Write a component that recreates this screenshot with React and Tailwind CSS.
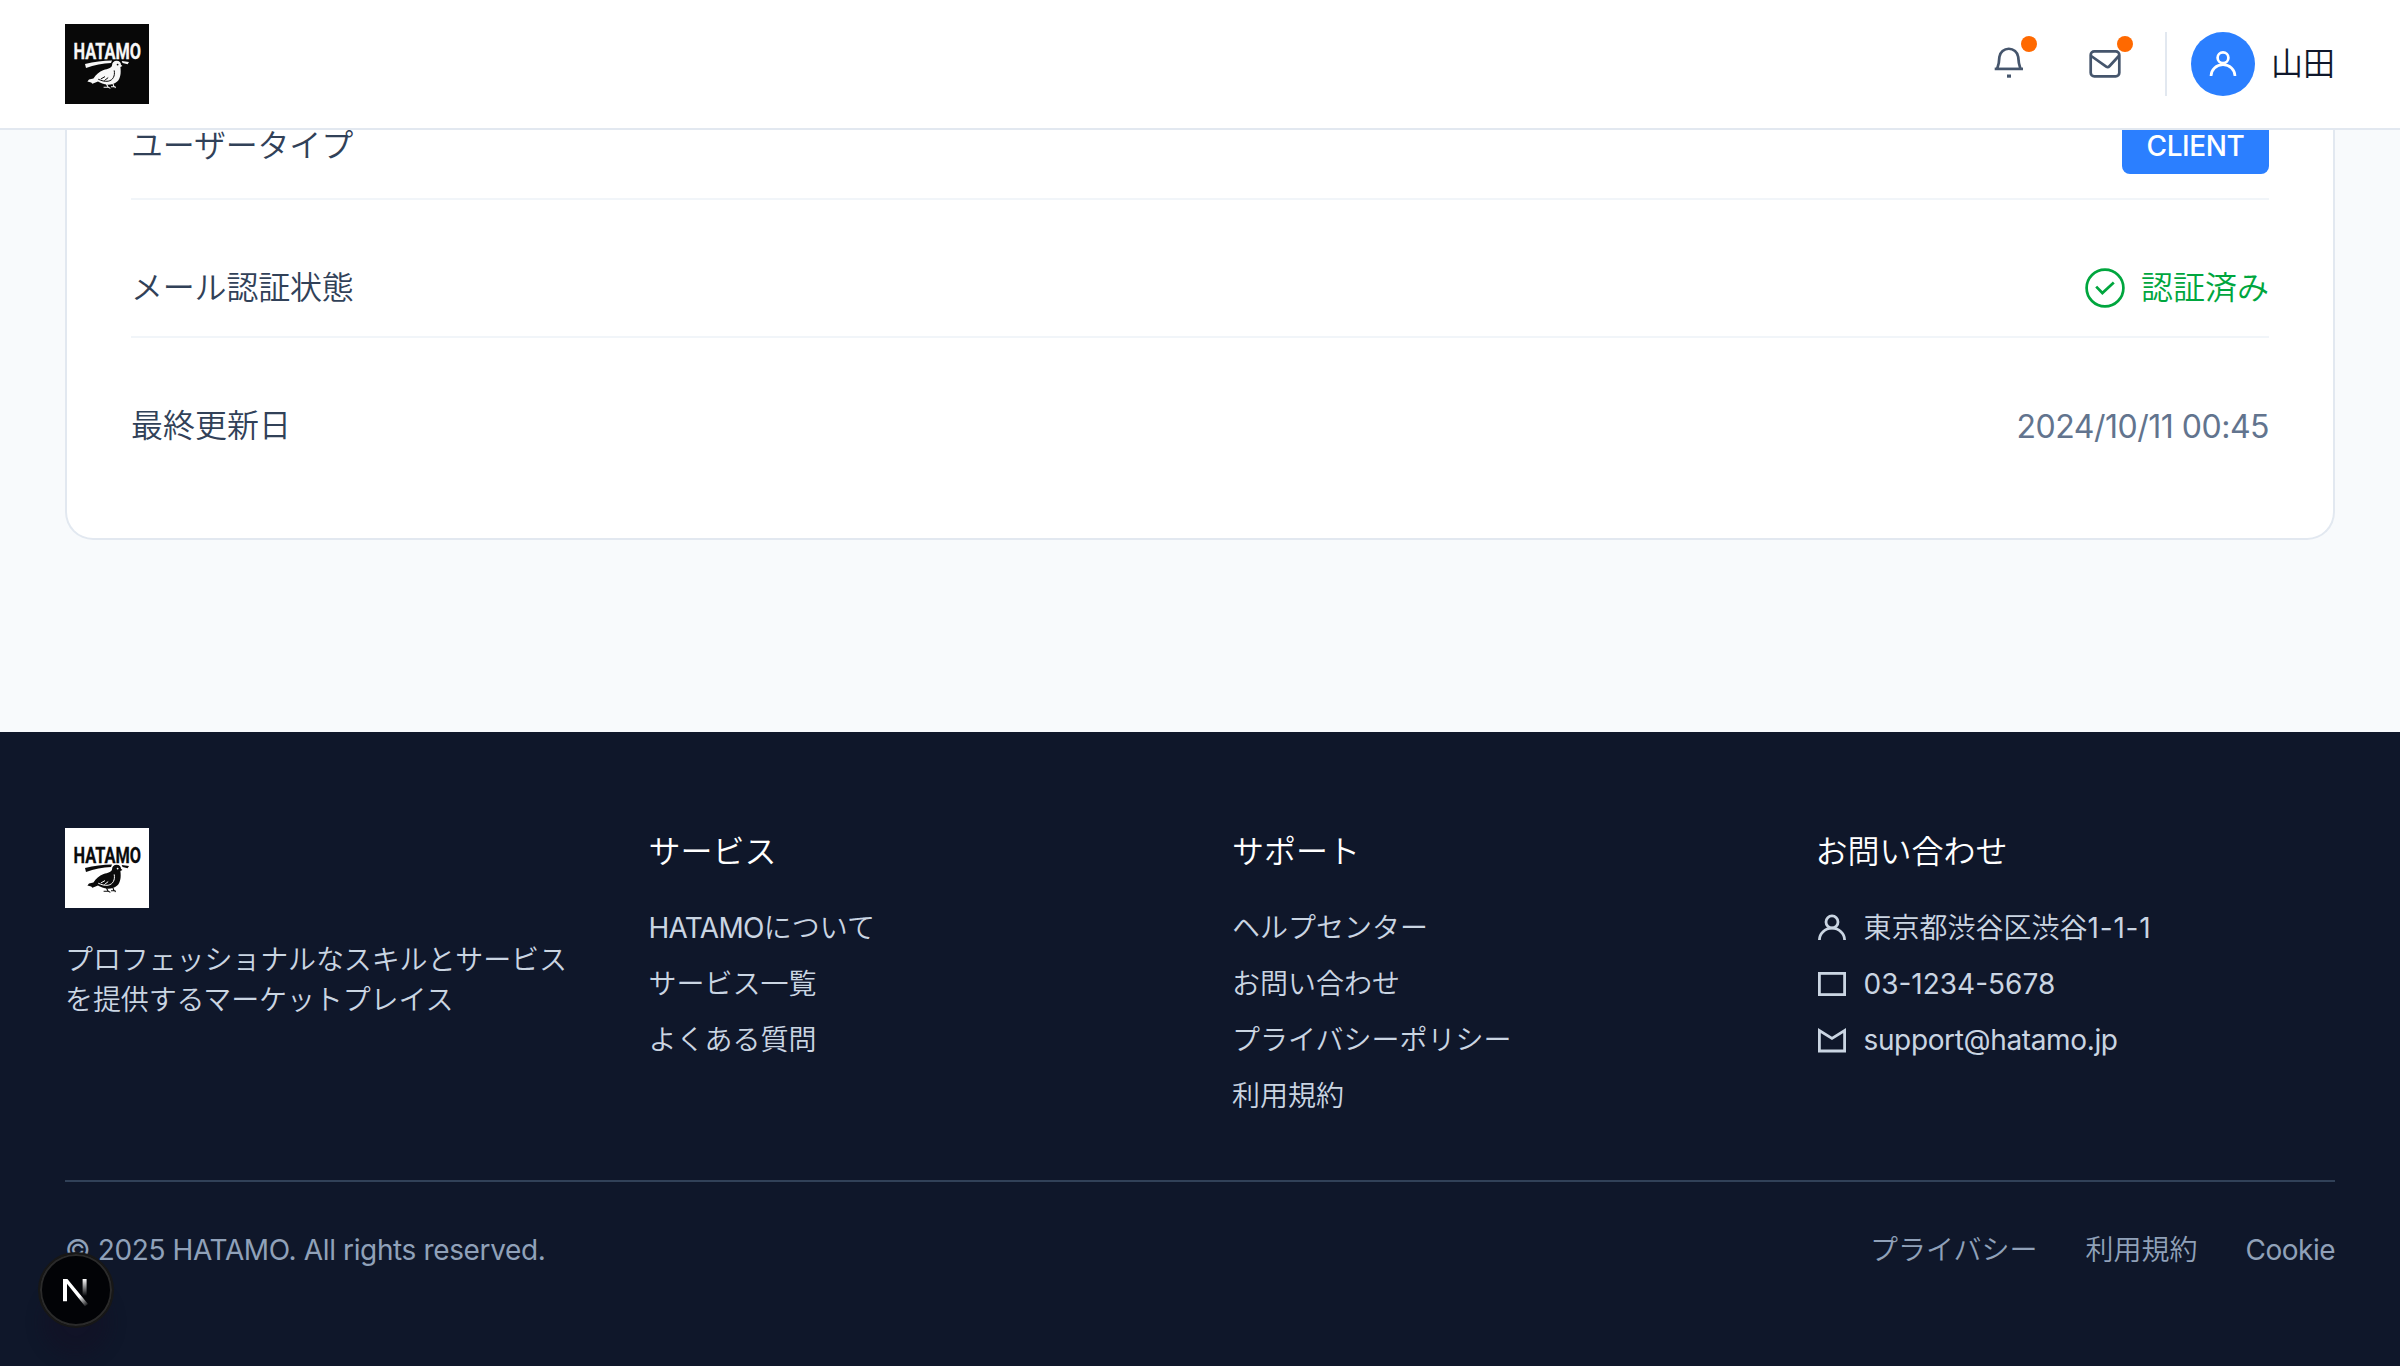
import React from "react";

const CONTACT = [
  { icon: "user", text: "東京都渋谷区渋谷", latin: "1-1-1", tracking: "tracking-[0.8px]" },
  { icon: "phone", text: "", latin: "03-1234-5678", tracking: "" },
  { icon: "mail", text: "", latin: "support@hatamo.jp", tracking: "tracking-[-0.36px]" },
];

function Latin({ className = "", children }) {
  return <span className={`font-normal ${className}`}>{children}</span>;
}

function Logo({ ink, paper }) {
  return (
    <svg width="84" height="80" viewBox="0 0 84 80" style={{ background: paper }} className="block overflow-visible">
      <text x="8.5" y="35.2" textLength="67.5" lengthAdjust="spacingAndGlyphs" fontFamily="Roboto, sans-serif" fontWeight="700" fontSize="21.4" fill={ink} stroke={ink} strokeWidth="0.3">
        HATAMO
      </text>
      <path d="M20 40 C29 37.8 38 36.7 47 36.6 L46 39 C38 39.2 29 41 21 44 Z" fill={ink} />
      <path d="M56.7 37 L64 38 L62.6 40.2 L57.6 39 Z" fill={ink} />
      <path
        d="M51.6 36.8 C54.6 36.8 56 39 56 40.8 L57.4 42 L55.4 43 C56.2 49.5 55.4 54.6 52.2 57.6 C49.6 60 46.5 60.8 43 60.8 C38.5 60.7 35.5 59 33 57.6 L27.4 59.8 L26.2 58.4 L22.4 57.6 L24 55.6 L28.4 54.6 C31 50.6 34 48 38.6 46 C43 44.6 46.4 44 47 41.4 C47.2 38.4 49 36.8 51.6 36.8 Z"
        fill={ink}
      />
      <path d="M49.2 46.4 C50.2 52 48 56.2 43.2 57.2 C39.5 57.8 36.4 56.6 33.2 55.2 M40 52.6 L35.8 55 M43.2 53.6 L39.4 56.6" fill="none" stroke={paper} strokeWidth="1" />
      <circle cx="52.6" cy="40.6" r="0.9" fill={paper} />
      <path d="M41.5 60 L43 63 M38.6 63.2 H43.4 L45.4 64.4 M48 60 L49 62.8 M46 62.8 H50 L50.4 64.2" fill="none" stroke={ink} strokeWidth="1.1" />
    </svg>
  );
}

function BellIcon() {
  return (
    <svg width="40" height="40" viewBox="0 0 40 40" fill="none" stroke="currentColor" strokeWidth="2.7">
      <path d="M8.2 24.8 C9.8 20.5 10.3 17 10.4 12.9 A9.5 9.5 0 0 1 29.2 12.9 C29.4 17 29.9 20.5 31.4 24.8" />
      <path d="M5.7 24.9 H34" />
      <path d="M18 32.1 H22" strokeWidth="3.2" />
    </svg>
  );
}

function MailIcon() {
  return (
    <svg width="40" height="40" viewBox="0 0 40 40" fill="none" stroke="currentColor" strokeWidth="2.7">
      <rect x="5.7" y="7.4" width="28.6" height="25" rx="3.6" />
      <path d="M6.2 12 L21.2 22.6 Q23 23.8 24.6 22 L33.8 12" />
    </svg>
  );
}

function UserIcon() {
  return (
    <svg width="32" height="32" viewBox="0 0 32 32" fill="none" stroke="currentColor" strokeWidth="2.7">
      <circle cx="16" cy="9.7" r="5.4" />
      <path d="M4 28 A12 11.4 0 0 1 28 28" />
    </svg>
  );
}

function CheckIcon() {
  return (
    <svg width="40" height="40" viewBox="0 0 40 40" fill="none" stroke="currentColor" strokeWidth="2.7" className="mt-1">
      <circle cx="20" cy="20" r="18.4" />
      <path d="M11.2 18.6 L17.4 25 L28.8 14.6" />
    </svg>
  );
}

function ContactIcon({ name }) {
  return (
    <svg width="32" height="32" viewBox="0 0 32 32" fill="none" stroke="currentColor" strokeWidth="2.8" className="shrink-0">
      {name === "user" && (
        <>
          <circle cx="16" cy="9.9" r="6" />
          <path d="M3.4 28 A12.6 11.8 0 0 1 28.6 28" />
        </>
      )}
      {name === "phone" && <rect x="3.4" y="5.4" width="25.2" height="21.2" />}
      {name === "mail" && <path d="M3.4 6.6 V27 H28.6 V6.6 L16 14.4 Z" />}
    </svg>
  );
}

function HeaderButton({ children }) {
  return (
    <button className="relative flex size-14 items-center justify-center text-slate-600">
      {children}
      <span className="absolute right-0 top-0 size-4 rounded-full bg-[#ff6900]" />
    </button>
  );
}

function FooterColumn({ title, children }) {
  return (
    <div>
      <h3 className="text-[32px] leading-[48px] text-white">{title}</h3>
      <ul className="mt-8 flex flex-col gap-4 text-[28px] leading-10 text-slate-300">{children}</ul>
    </div>
  );
}

function NextBadge() {
  return (
    <div className="fixed left-[38px] top-[1252px] flex size-[76px] items-center justify-center rounded-full border-2 border-[#171717] bg-black shadow-[0_32px_16px_-4px_rgba(20,16,36,0.4)]">
      <div className="flex size-[72px] shrink-0 items-center justify-center rounded-full border-2 border-[#2a2a2a] bg-[#020306]">
        <svg width="40" height="40" viewBox="0 0 40 40" fill="none">
          <defs>
            <linearGradient id="stem" x1="0" y1="9" x2="0" y2="26" gradientUnits="userSpaceOnUse">
              <stop stopColor="#fff" />
              <stop offset="1" stopColor="#fff" stopOpacity="0" />
            </linearGradient>
            <linearGradient id="diag" x1="24" y1="26" x2="32" y2="36" gradientUnits="userSpaceOnUse">
              <stop stopColor="#fff" />
              <stop offset="1" stopColor="#fff" stopOpacity="0" />
            </linearGradient>
          </defs>
          <path d="M26.6 9 H30.6 V26 H26.6 Z" fill="url(#stem)" />
          <path d="M7 31.3 V9 H11.4 L32 34 L29 36.2 L11 13.8 V31.3 Z" fill="url(#diag)" />
        </svg>
      </div>
    </div>
  );
}

export default function App() {
  return (
    <div className="flex h-[1366px] w-[2400px] flex-col overflow-hidden bg-slate-50 font-['Inter','Noto_Sans_CJK_JP',sans-serif] font-[350]">
      <header className="flex h-[130px] shrink-0 items-center justify-between border-b-2 border-slate-200 bg-white px-[65px]">
        <Logo ink="#f7f7f7" paper="#080808" />
        <div className="flex items-center">
          <div className="mr-8 flex items-center gap-10">
            <HeaderButton>
              <BellIcon />
            </HeaderButton>
            <HeaderButton>
              <MailIcon />
            </HeaderButton>
          </div>
          <div className="flex h-16 items-center gap-4 border-l-2 border-slate-200 pl-6">
            <div className="flex size-16 items-center justify-center rounded-full bg-[#2b7fff] text-white">
              <UserIcon />
            </div>
            <span className="text-[32px] leading-[48px] text-slate-900">山田</span>
          </div>
        </div>
      </header>

      <main className="h-[602px] shrink-0 overflow-hidden px-[65px]">
        <section className="h-[410px] rounded-b-[28px] border-2 border-t-0 border-slate-200 bg-white px-16 text-[32px] leading-[48px] text-slate-700">
          <div className="flex h-[70px] items-start justify-between border-b-2 border-slate-100">
            <span className="-mt-2 tracking-[-0.2px]">ユーザータイプ</span>
            <span className="-mt-3 flex h-14 w-[147px] items-center justify-center rounded-lg bg-[#2b7fff] text-[28px] font-medium tracking-[-0.4px] text-white">
              CLIENT
            </span>
          </div>
          <div className="flex h-[138px] justify-between border-b-2 border-slate-100 pt-16">
            <span className="tracking-[-0.2px]">メール認証状態</span>
            <span className="flex items-start gap-4 text-[#00a63e]">
              <CheckIcon />
              認証済み
            </span>
          </div>
          <div className="flex justify-between pt-16">
            <span>最終更新日</span>
            <Latin className="mt-px tracking-[-0.5px] text-slate-500">2024/10/11 00:45</Latin>
          </div>
        </section>
      </main>

      <footer className="flex-1 bg-[#0f172a] px-[65px] pt-24">
        <div className="grid grid-cols-4 gap-16">
          <div>
            <Logo ink="#0b0b0b" paper="#ffffff" />
            <p className="mt-8 text-[28px] leading-10 tracking-[-0.12px] text-slate-300">
              プロフェッショナルなスキルとサービス
              <br />
              を提供するマーケットプレイス
            </p>
          </div>
          <FooterColumn title="サービス">
            <li>
              <Latin className="tracking-[-0.7px]">HATAMO</Latin>について
            </li>
            <li>サービス一覧</li>
            <li>よくある質問</li>
          </FooterColumn>
          <FooterColumn title="サポート">
            <li>ヘルプセンター</li>
            <li>お問い合わせ</li>
            <li>プライバシーポリシー</li>
            <li>利用規約</li>
          </FooterColumn>
          <FooterColumn title="お問い合わせ">
            {CONTACT.map((item) => (
              <li key={item.icon} className="flex items-center gap-4">
                <ContactIcon name={item.icon} />
                <span>
                  {item.text}
                  <Latin className={item.tracking}>{item.latin}</Latin>
                </span>
              </li>
            ))}
          </FooterColumn>
        </div>
        <div className="mt-16 flex justify-between border-t-2 border-slate-700 pt-12 text-[28px] leading-10 text-slate-400">
          <Latin className="tracking-[-0.37px]">© 2025 HATAMO. All rights reserved.</Latin>
          <nav className="flex gap-12">
            <span>プライバシー</span>
            <span>利用規約</span>
            <Latin className="tracking-[-0.5px]">Cookie</Latin>
          </nav>
        </div>
      </footer>
      <NextBadge />
    </div>
  );
}
